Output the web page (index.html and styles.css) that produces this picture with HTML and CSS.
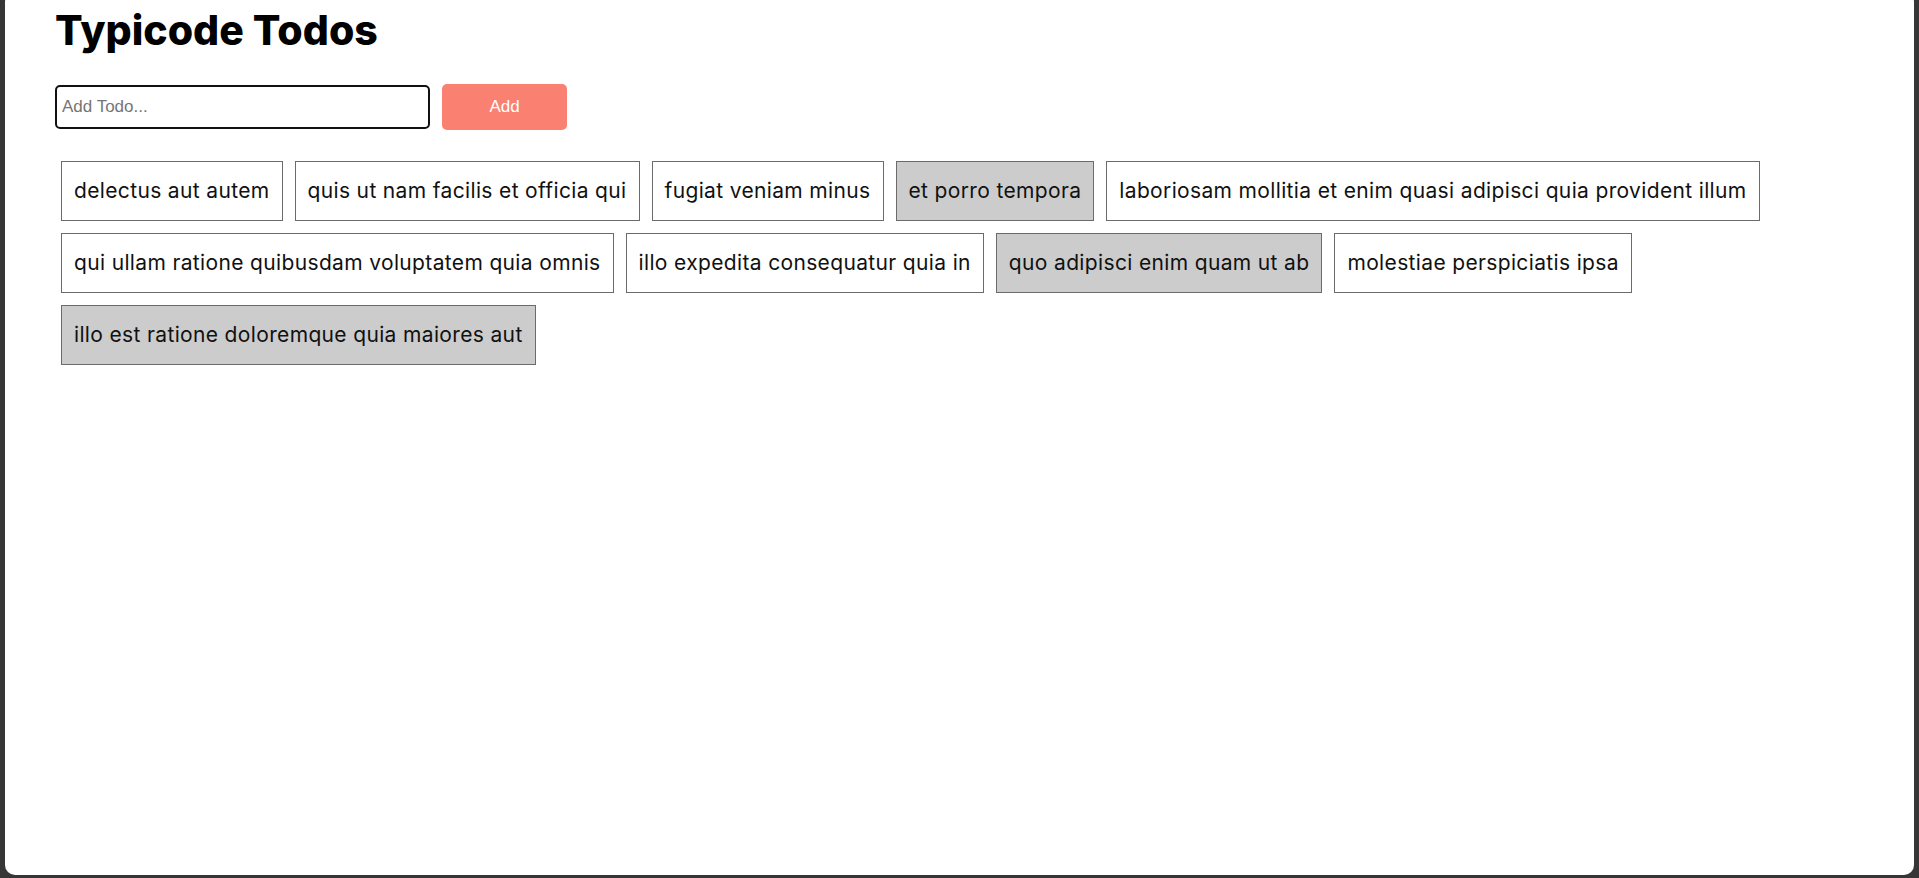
FILE: index.html
```html
<!DOCTYPE html>
<html lang="en">
<head>
<meta charset="utf-8">
<title>Typicode Todos</title>
<link rel="stylesheet" href="styles.css">
</head>
<body>
<div class="window">
  <h1 class="title">Typicode Todos</h1>
  <form class="todo-form">
    <input class="todo-input" type="text" placeholder="Add Todo...">
    <button class="add-btn" type="button">Add</button>
  </form>
  <div class="todo-list">
    <div class="todo">delectus aut autem</div>
    <div class="todo">quis ut nam facilis et officia qui</div>
    <div class="todo">fugiat veniam minus</div>
    <div class="todo done">et porro tempora</div>
    <div class="todo">laboriosam mollitia et enim quasi adipisci quia provident illum</div>
    <div class="todo">qui ullam ratione quibusdam voluptatem quia omnis</div>
    <div class="todo">illo expedita consequatur quia in</div>
    <div class="todo done">quo adipisci enim quam ut ab</div>
    <div class="todo">molestiae perspiciatis ipsa</div>
    <div class="todo done">illo est ratione doloremque quia maiores aut</div>
  </div>
</div>
</body>
</html>
```

FILE: styles.css
```css
html, body {
  height: 100%;
  margin: 0;
}
body {
  background: #363636;
  padding: 0 5px 3px;
  box-sizing: border-box;
  display: flex;
  font-family: Inter, "Noto Sans", sans-serif;
}
.window {
  flex: 1;
  background: #fff;
  border-radius: 10px;
  margin-top: -8px;
  padding: 8px 50px 0;
}
.title {
  margin: 0;
  padding-top: 6px;
  font-family: Inter, sans-serif;
  font-weight: 800;
  font-size: 41px;
  line-height: 48px;
  letter-spacing: 0;
  color: #000;
}
.todo-form {
  display: flex;
  align-items: center;
  gap: 12px;
  margin-top: 30px;
}
.todo-input {
  width: 375px;
  height: 44px;
  box-sizing: border-box;
  border: 2px solid #111;
  border-radius: 5px;
  padding: 0 5px;
  font-family: "Liberation Sans", Arial, sans-serif;
  font-size: 17px;
  color: #000;
  outline: none;
}
.todo-input::placeholder {
  color: #757575;
}
.add-btn {
  width: 125px;
  height: 46px;
  border: none;
  border-radius: 5px;
  background: #fa8072;
  color: #fff;
  font-family: "Liberation Sans", Arial, sans-serif;
  font-size: 17px;
}
.todo-list {
  display: flex;
  flex-wrap: wrap;
  margin-top: 25px;
}
.todo {
  margin: 6px;
  padding: 12px;
  border: 1px solid #6b6b6b;
  font-size: 21px;
  line-height: 34px;
  letter-spacing: 0.35px;
  color: #111;
}
.todo.done {
  background: #cccccc;
}
```
